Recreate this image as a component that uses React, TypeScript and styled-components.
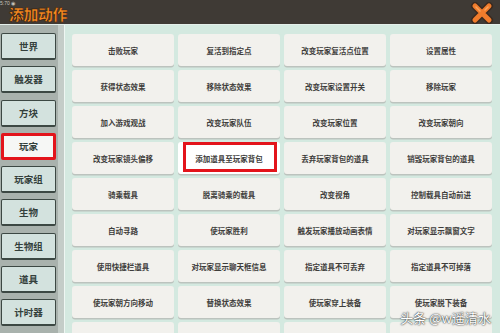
import React from "react";
import styled, { createGlobalStyle } from "styled-components";

const categories = [
  "世界",
  "触发器",
  "方块",
  "玩家",
  "玩家组",
  "生物",
  "生物组",
  "道具",
  "计时器",
];

const actions = [
  "击败玩家",
  "复活到指定点",
  "改变玩家复活点位置",
  "设置属性",
  "获得状态效果",
  "移除状态效果",
  "改变玩家设置开关",
  "移除玩家",
  "加入游戏观战",
  "改变玩家队伍",
  "改变玩家位置",
  "改变玩家朝向",
  "改变玩家镜头偏移",
  "添加道具至玩家背包",
  "丢弃玩家背包的道具",
  "销毁玩家背包的道具",
  "骑乘载具",
  "脱离骑乘的载具",
  "改变视角",
  "控制载具自动前进",
  "自动寻路",
  "使玩家胜利",
  "触发玩家播放动画表情",
  "对玩家显示飘窗文字",
  "使用快捷栏道具",
  "对玩家显示聊天框信息",
  "指定道具不可丢弃",
  "指定道具不可掉落",
  "使玩家朝方向移动",
  "替换状态效果",
  "使玩家穿上装备",
  "使玩家脱下装备",
  "",
  "",
  "",
  "",
];

const App = () => {
  return (
    <>
      <GlobalStyle />
      <Screen>
        <StatusText>5:70 ◉</StatusText>
        <Header>
          <Title>添加动作</Title>
          <CloseButton aria-label="close">
            <svg width="28" height="22" viewBox="0 0 28 22">
              <g strokeLinecap="round">
                <path d="M7 4 L21 18 M21 4 L7 18" stroke="#3a2a20" strokeWidth="8" />
                <path d="M7 4 L21 18 M21 4 L7 18" stroke="#f07c2c" strokeWidth="5" />
                <path d="M8 5 L12 9 M20 5 L17 8" stroke="#f9a35c" strokeWidth="1.5" />
              </g>
            </svg>
          </CloseButton>
        </Header>
        <Body>
          <Sidebar>
            {categories.map((name) => (
              <CategoryButton key={name} selected={name === "玩家"}>
                {name}
              </CategoryButton>
            ))}
          </Sidebar>
          <Content>
            <ActionGrid>
              {actions.map((name, i) => (
                <ActionButton key={i} marked={name === "添加道具至玩家背包"}>
                  {name}
                </ActionButton>
              ))}
            </ActionGrid>
          </Content>
        </Body>
        <Watermark>头条 @w遥清水</Watermark>
      </Screen>
    </>
  );
};

const GlobalStyle = createGlobalStyle`
  body {
    margin: 0;
    background: #d4e9e0;
    font-family: "Noto Sans CJK SC", "Noto Sans", sans-serif;
  }
`;

const Screen = styled.div`
  position: relative;
  display: flex;
  flex-direction: column;

  width: 500px;
  height: 333px;
  overflow: hidden;
  background: #d4e9e0;
`;

const StatusText = styled.span`
  position: absolute;
  top: 0;
  left: 0;
  font-family: "Liberation Sans", sans-serif;
  font-size: 5px;
  line-height: 6px;
  color: #c9c4bd;
`;

const Header = styled.div`
  display: flex;
  align-items: center;
  justify-content: space-between;

  height: 25px;
  padding: 0 4px 0 9px;
  background: #3f3a35;
  border-bottom: 1px solid #e4efea;
`;

const Title = styled.h1`
  margin: 3px 0 0;
  font-size: 15px;
  font-weight: 900;
  line-height: 18px;
  letter-spacing: -0.5px;
  color: #f7891f;
  -webkit-text-stroke: 0.6px #3a2414;
`;

const CloseButton = styled.div`
  display: flex;
  margin-top: 2px;
`;

const Body = styled.div`
  display: flex;
  flex: 1;
`;

const Sidebar = styled.div`
  display: flex;
  flex-direction: column;
  gap: 6.25px;

  width: 57px;
  padding: 8px 0 0 1px;
  background: #a9b2ad;
  border-right: 6px solid #c4cdc8;
`;

const CategoryButton = styled.div<{ selected?: boolean }>`
  display: flex;
  align-items: center;
  justify-content: center;
  box-sizing: border-box;

  width: 55px;
  height: 27px;
  border: ${(p) => (p.selected ? "3px solid #e3141b" : "1.5px solid #3c4843")};
  border-bottom-width: ${(p) => (p.selected ? "3px" : "2.5px")};
  border-radius: 2px;
  background: ${(p) => (p.selected ? "#f6f7f5" : "#d3e2de")};

  font-size: 9.5px;
  font-weight: 700;
  color: #34403b;
`;

const Content = styled.div`
  flex: 1;
  padding: 9px 0 0 7px;
  border-left: 1px solid #eef6f2;
`;

const ActionGrid = styled.div`
  display: grid;
  grid-template-columns: repeat(4, 102px);
  grid-auto-rows: 32px;
  gap: 4px;
`;

const ActionButton = styled.div<{ marked?: boolean }>`
  position: relative;
  display: flex;
  align-items: center;
  justify-content: center;

  border-radius: 3px;
  background: ${(p) => (p.marked ? "#ffffff" : "#f2f1ed")};
  box-shadow: 0 1.5px 0 #bcc3be;

  font-size: 7.5px;
  font-weight: 700;
  color: #3e3d3b;

  &::after {
    content: "";
    display: ${(p) => (p.marked ? "block" : "none")};
    position: absolute;
    top: 0;
    right: 3px;
    bottom: 2px;
    left: 5px;
    border: 3px solid #e3141b;
  }
`;

const Watermark = styled.span`
  position: absolute;
  right: 9px;
  bottom: 8px;
  font-size: 13px;
  line-height: 15px;
  color: #ffffff;
  text-shadow: 0 0 2px #333, 0 0 1px #333;
`;

export default App;
